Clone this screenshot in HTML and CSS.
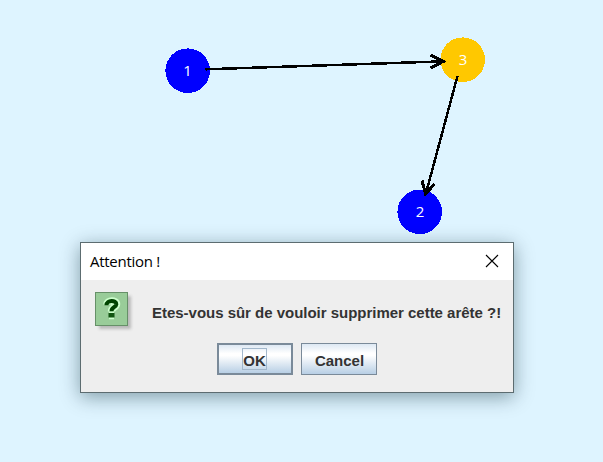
FILE: index.html
```html
<!DOCTYPE html>
<html lang="fr">
<head>
<meta charset="utf-8">
<title>Attention !</title>
<link rel="stylesheet" href="styles.css">
</head>
<body>
<svg class="graph" width="603" height="462" viewBox="0 0 603 462">
  <g shape-rendering="crispEdges">
    <circle class="node" cx="187.700" cy="70.700" r="22.3"/>
    <circle class="node selected" cx="462.7" cy="59.700" r="22.3"/>
    <circle class="node" cx="419.700" cy="211.800" r="22.3"/>
    <g class="edge">
      <path d="M205.500 69.300L445 61.300"/>
      <path d="M457.500 76L425.500 195"/>
      <path class="head" d="M430.500 55L443.500 61.300L430.500 68"/>
      <path class="head" d="M422 180.500L425.500 194L434.500 184"/>
    </g>
  </g>
  <text class="label" x="187.500" y="76">1</text>
  <text class="label" x="463" y="65">3</text>
  <text class="label" x="420" y="217">2</text>
</svg>
<section class="dialog">
  <header class="titlebar">
    <span class="title">Attention !</span>
    <svg class="close" width="14" height="14" viewBox="0 0 14 14"><path d="M1 1L13 13M13 1L1 13"/></svg>
  </header>
  <div class="message">
    <svg class="question" width="39" height="40" viewBox="0 0 39 40">
      <rect class="shade" x="4" y="4" width="32" height="33"/>
      <rect class="tile" x=".5" y=".5" width="32" height="33"/>
      <path class="halo" d="M12 12.500C12 8 21.500 8 21.500 12C21.500 15.500 16.500 15 16.500 19.500M14 23.500H19"/>
      <path class="mark" d="M11.500 13.200C11.500 7.800 21.500 7.800 21.300 12.200C21 15.500 16.500 15 16.500 19.200"/>
      <rect class="dot" x="13.500" y="21" width="6" height="4.500"/>
    </svg>
    <p>Etes-vous sûr de vouloir supprimer cette arête ?!</p>
  </div>
  <div class="actions">
    <button class="primary"><span>OK</span></button>
    <button>Cancel</button>
  </div>
</section>
</body>
</html>
```
FILE: styles.css
```css
* { box-sizing: border-box; }
body {
  margin: 0;
  width: 603px;
  height: 462px;
  overflow: hidden;
  background: #def4ff;
  font-family: "Liberation Sans", Arial, sans-serif;
}
.graph { display: block; }
.node { fill: #0000ff; }
.node.selected { fill: #ffc800; }
.edge { fill: none; stroke: #000; stroke-width: 2.5; }
.head { stroke-width: 3; }
.label { fill: #fff; font: 15px "Open Sans", sans-serif; text-anchor: middle; }
.dialog {
  position: absolute;
  left: 80px;
  top: 242px;
  width: 434px;
  height: 151px;
  border: 1px solid #5c6c70;
  background: #eee;
  box-shadow: 0 4px 18px rgba(0, 35, 45, .42);
}
.titlebar {
  height: 37px;
  padding: 0 14px 0 9px;
  background: #fff;
  display: flex;
  align-items: center;
  justify-content: space-between;
}
.title { font: 15px "Open Sans", sans-serif; letter-spacing: -.28px; color: #000; padding-bottom: 2px; }
.close { fill: none; stroke: #000; stroke-width: 1.1; margin-bottom: 1px; }
.message { display: flex; height: 40px; margin: 12px 0 0 14px; }
.message p {
  margin: 12px 0 0 18px;
  font-size: 15px;
  line-height: 17px;
  letter-spacing: -.02px;
  font-weight: bold;
  color: #333;
  white-space: nowrap;
}
.question { flex: none; }
.shade { fill: #b9b9b9; filter: blur(1.5px); }
.tile { fill: #99cc99; stroke: #669068; }
.halo { fill: none; stroke: #ccffcc; stroke-width: 7.5; }
.mark { fill: none; stroke: #004400; stroke-width: 4; }
.dot { fill: #115511; }
.actions { display: flex; gap: 8px; margin: 11px 0 0 136px; }
.actions button {
  width: 76px;
  height: 32px;
  padding: 2px 0 0 1px;
  border: 1px solid #7a8a99;
  background: linear-gradient(#dde8f3 0%, #fff 30%, #fff 38%, #b8cfe5 100%);
  font: bold 15px "Liberation Sans", Arial, sans-serif;
  color: #333;
}
.actions .primary {
  border-width: 2px;
  padding: 0;
  display: flex;
  align-items: center;
  justify-content: center;
}
.primary span {
  width: 25px;
  height: 22px;
  margin-right: 1px;
  border: 1px solid #a3b8cc;
  line-height: 24px;
  display: flex;
  justify-content: center;
}
```
